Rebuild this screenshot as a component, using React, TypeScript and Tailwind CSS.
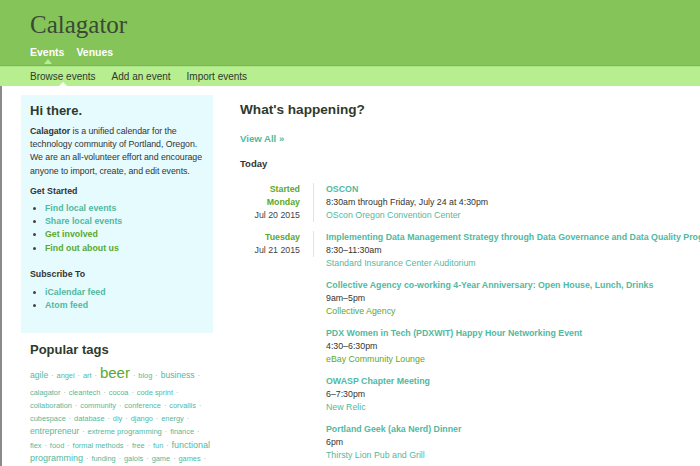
import React from "react";

const TEAL = "text-[#52b99f]";
const GREEN = "text-[#5aa92e]";

type Tag = { t: string; s: string; c?: string };

const rows: Tag[][] = [
  [
    { t: "agile", s: "text-[8.6px]" },
    { t: "angel", s: "text-[7.4px]" },
    { t: "art", s: "text-[7.4px]" },
    { t: "beer", s: "text-[15px] leading-[15px]", c: GREEN },
    { t: "blog", s: "text-[7.4px]" },
    { t: "business", s: "text-[8.6px]" },
  ],
  [
    { t: "calagator", s: "text-[7.4px]" },
    { t: "cleantech", s: "text-[7.4px]" },
    { t: "cocoa", s: "text-[7.4px]" },
    { t: "code sprint", s: "text-[7.4px]" },
  ],
  [
    { t: "collaboration", s: "text-[7.4px]" },
    { t: "community", s: "text-[7.4px]" },
    { t: "conference", s: "text-[7.4px]" },
    { t: "corvallis", s: "text-[7.4px]" },
  ],
  [
    { t: "cubespace", s: "text-[7.4px]" },
    { t: "database", s: "text-[7.4px]" },
    { t: "diy", s: "text-[7.4px]" },
    { t: "django", s: "text-[7.4px]" },
    { t: "energy", s: "text-[7.4px]" },
  ],
  [
    { t: "entrepreneur", s: "text-[8.6px]" },
    { t: "extreme programming", s: "text-[7.6px]" },
    { t: "finance", s: "text-[7.4px]" },
  ],
  [
    { t: "flex", s: "text-[7.4px]" },
    { t: "food", s: "text-[7.4px]" },
    { t: "formal methods", s: "text-[7.4px]" },
    { t: "free", s: "text-[7.4px]" },
    { t: "fun", s: "text-[7.4px]" },
    { t: "functional", s: "text-[9px]" },
  ],
  [
    { t: "programming", s: "text-[9px]" },
    { t: "funding", s: "text-[7.4px]" },
    { t: "galois", s: "text-[7.4px]" },
    { t: "game", s: "text-[7.4px]" },
    { t: "games", s: "text-[7.4px]" },
  ],
];

type Ev = {
  date?: { top: string[]; sub: string };
  title: string;
  time: string;
  venue: string;
  venueGreen?: boolean;
};

const events: Ev[] = [
  {
    date: { top: ["Started", "Monday"], sub: "Jul 20 2015" },
    title: "OSCON",
    time: "8:30am through Friday, July 24 at 4:30pm",
    venue: "OScon Oregon Convention Center",
  },
  {
    date: { top: ["Tuesday"], sub: "Jul 21 2015" },
    title:
      "Implementing Data Management Strategy through Data Governance and Data Quality Programs",
    time: "8:30–11:30am",
    venue: "Standard Insurance Center Auditorium",
  },
  {
    title: "Collective Agency co-working 4-Year Anniversary: Open House, Lunch, Drinks",
    time: "9am–5pm",
    venue: "Collective Agency",
    venueGreen: true,
  },
  {
    title: "PDX Women in Tech (PDXWIT) Happy Hour Networking Event",
    time: "4:30–6:30pm",
    venue: "eBay Community Lounge",
    venueGreen: true,
  },
  {
    title: "OWASP Chapter Meeting",
    time: "6–7:30pm",
    venue: "New Relic",
  },
  {
    title: "Portland Geek (aka Nerd) Dinner",
    time: "6pm",
    venue: "Thirsty Lion Pub and Grill",
  },
];

function Bullet({ children, green }: { children: React.ReactNode; green?: boolean }) {
  return (
    <li className="flex items-center h-[13.2px]">
      <span className="ml-[3px] w-[3px] h-[3px] rounded-full bg-[#444]" />
      <span className={`ml-[9px] font-bold ${green ? GREEN : TEAL}`}>{children}</span>
    </li>
  );
}

export default function App() {
  return (
    <div
      className="w-[700px] h-screen overflow-hidden bg-white text-[#333]"
      style={{ fontFamily: '"Liberation Sans", Arial, sans-serif' }}
    >
      {/* header */}
      <div className="relative h-[66px] bg-[#84c458] border-b border-[#7cb951] pl-[30px] pt-[10px]">
        <div
          className="text-[25px] leading-[30px] text-[#3b4836]"
          style={{ fontFamily: '"Liberation Serif", Georgia, serif' }}
        >
          Calagator
        </div>
        <div className="mt-[5px] flex gap-[12px] text-[10.5px] leading-[14px] font-bold text-white">
          <span className="relative">
            Events
            <span className="absolute left-[14px] top-[14px] w-0 h-0 border-l-[4px] border-r-[4px] border-b-[5px] border-l-transparent border-r-transparent border-b-[#b6ee90]" />
          </span>
          <span>Venues</span>
        </div>
      </div>
      {/* subnav */}
      <div className="relative h-[20px] bg-[#b6ee90] border-t border-[#a9e483] pl-[30px] flex items-center gap-[16px] text-[10px] text-[#2f3a2b]">
        <span className="relative">
          Browse events
          <span className="absolute left-[29px] top-[13px] w-0 h-0 border-l-[4px] border-r-[4px] border-b-[4px] border-l-transparent border-r-transparent border-b-white" />
        </span>
        <span>Add an event</span>
        <span>Import events</span>
      </div>

      {/* body */}
      <div className="flex border-l-2 border-[#8a8a8a] h-full">
        {/* sidebar */}
        <div className="ml-[19px] w-[192px] shrink-0">
          <div className="mt-[9px] bg-[#e6fbfe] px-[9px] pt-[7px] pb-[21px] text-[8.8px] leading-[13.2px]">
            <div className="text-[13px] leading-[18px] font-bold text-[#2e3a2e]">Hi there.</div>
            <p className="mt-[5px] text-[#333] whitespace-nowrap tracking-[-0.05px]">
              <b>Calagator</b> is a unified calendar for the
              <br />
              technology community of Portland, Oregon.
              <br />
              We are an all-volunteer effort and encourage
              <br />
              anyone to import, create, and edit events.
            </p>
            <div className="mt-[7px] font-bold text-[#333]">Get Started</div>
            <ul className="mt-[4px]">
              <Bullet>Find local events</Bullet>
              <Bullet>Share local events</Bullet>
              <Bullet green>Get involved</Bullet>
              <Bullet green>Find out about us</Bullet>
            </ul>
            <div className="mt-[13px] font-bold text-[#333]">Subscribe To</div>
            <ul className="mt-[5px]">
              <Bullet>iCalendar feed</Bullet>
              <Bullet>Atom feed</Bullet>
            </ul>
          </div>
          <div className="px-[9px]">
            <div className="mt-[7px] text-[13px] leading-[20px] font-bold text-[#2e3a2e]">
              Popular tags
            </div>
            <div className="mt-[3px]">
              {rows.map((row, ri) => (
                <div
                  key={ri}
                  className={`flex items-baseline whitespace-nowrap leading-[13px] ${
                    ri === 0 ? "h-[22.5px] pt-[2px]" : "h-[13.2px]"
                  }`}
                >
                  {row.map((tg, i) => (
                    <React.Fragment key={i}>
                      <span className={`${tg.s} ${tg.c ?? TEAL}`}>{tg.t}</span>
                      {!(ri === 5 && i === row.length - 1) && (
                        <span className="text-[7px] text-[#8aa] px-[3px]">·</span>
                      )}
                    </React.Fragment>
                  ))}
                </div>
              ))}
            </div>
          </div>
        </div>

        {/* main */}
        <div className="ml-[27px] pt-[15px] flex-1 min-w-0">
          <div className="text-[13.6px] leading-[18px] font-bold text-[#2e3a2e] whitespace-nowrap">
            What's happening?
          </div>
          <div className={`mt-[13px] text-[9.6px] leading-[13px] font-bold ${TEAL}`}>View All »</div>
          <div className="mt-[12px] text-[9.5px] leading-[13px] font-bold text-[#333]">Today</div>
          <div className="mt-[12.5px] flex flex-col gap-[9px] text-[8.8px] leading-[13px]">
            {events.map((e, i) => (
              <div key={i} className="flex items-start whitespace-nowrap">
                <div
                  className={`w-[74px] shrink-0 text-right pr-[13px] ${
                    e.date ? "border-r border-[#d6f0c6]" : ""
                  }`}
                >
                  {e.date && (
                    <>
                      {e.date.top.map((t) => (
                        <div key={t} className={`font-bold ${GREEN}`}>
                          {t}
                        </div>
                      ))}
                      <div className="text-[#444]">{e.date.sub}</div>
                    </>
                  )}
                </div>
                <div className="pl-[12px]">
                  <div className={`font-bold ${TEAL}`}>{e.title}</div>
                  <div className="text-[#333]">{e.time}</div>
                  <div className={e.venueGreen ? GREEN : TEAL}>{e.venue}</div>
                </div>
              </div>
            ))}
          </div>
        </div>
      </div>
    </div>
  );
}
